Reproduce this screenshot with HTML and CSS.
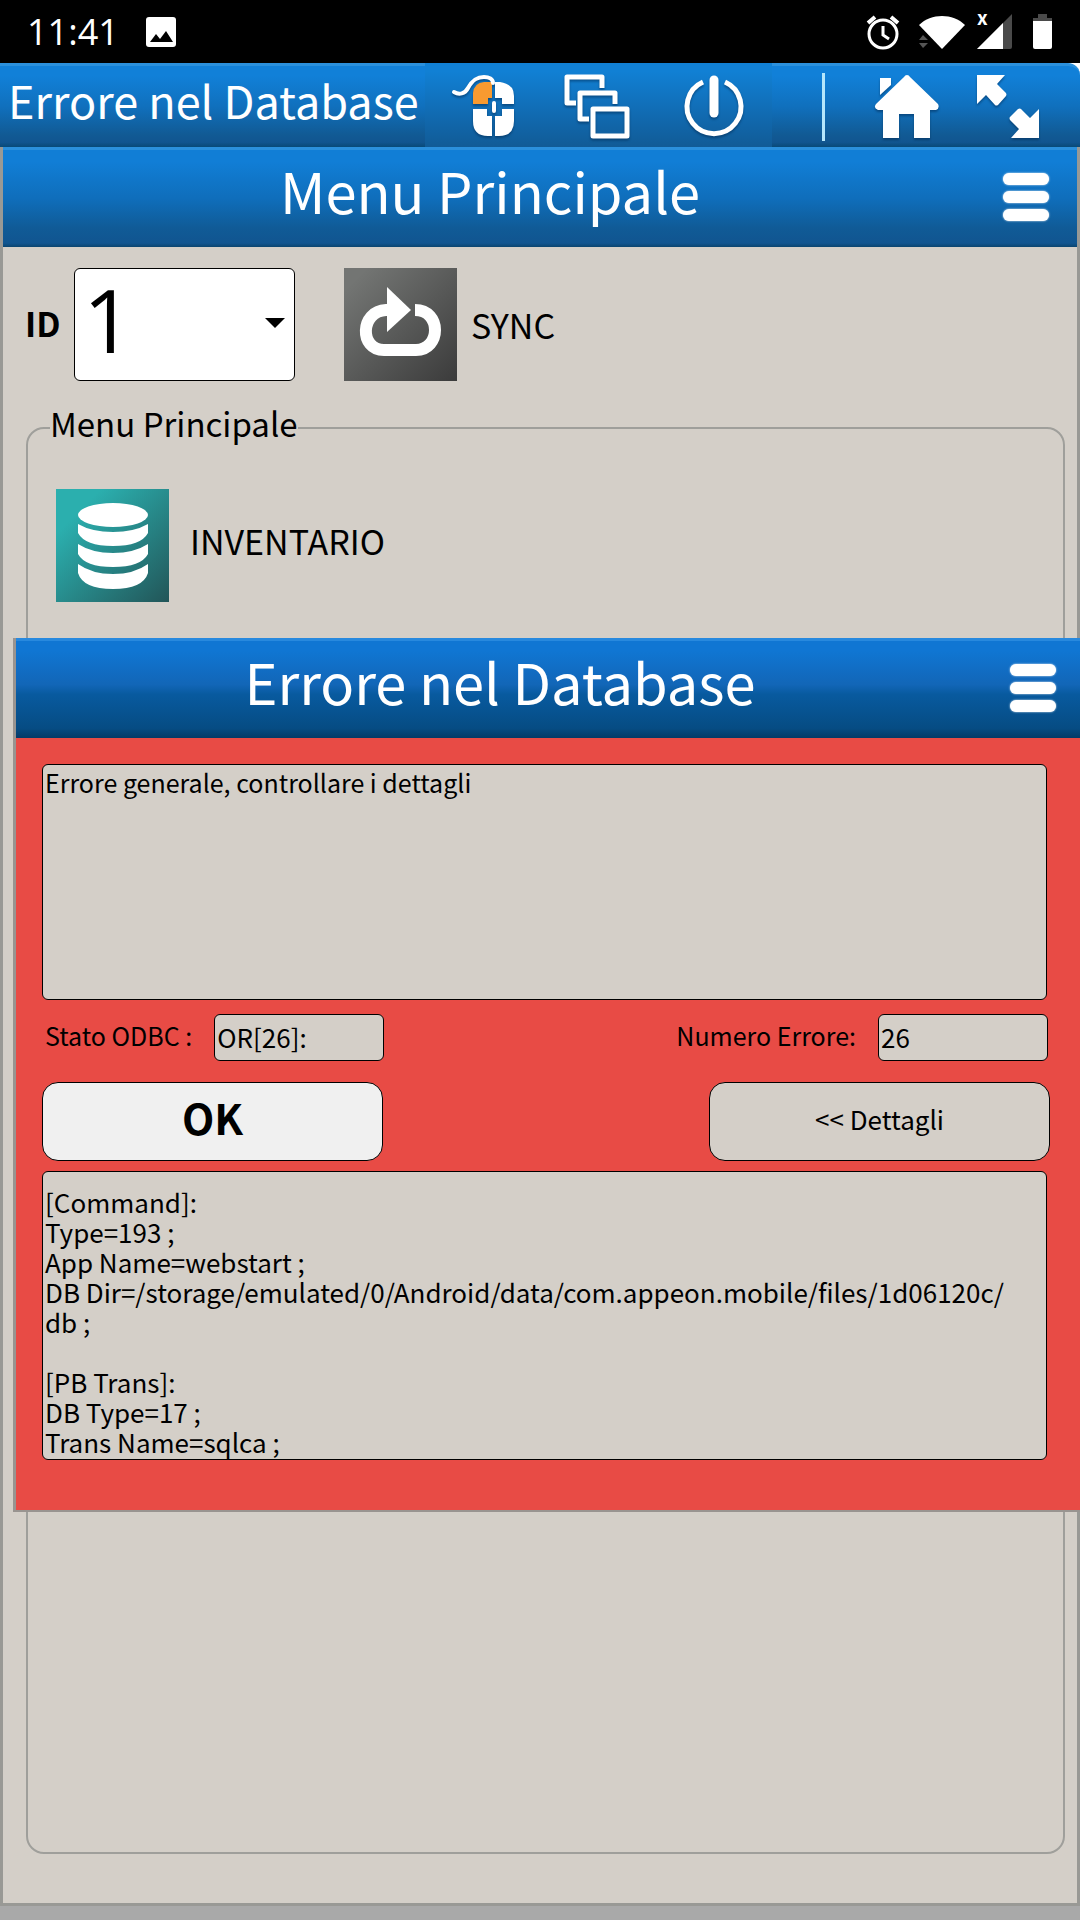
FILE: index.html
```html
<!DOCTYPE html>
<html lang="it">
<head>
  <meta charset="UTF-8">
  <title>Errore nel Database</title>
  <meta name="viewport" content="width=device-width, initial-scale=1.0">
  <link rel="stylesheet" href="styles.css">
</head>
<body>

  <!-- Status bar -->
  <div class="status-bar">
    <span class="clock">11:41</span>
    <svg class="photo-icon" width="30" height="30" viewBox="0 0 30 30">
      <rect width="30" height="30" rx="3" fill="#fff"/>
      <path d="M4 25l6-8 4 5 6-8 7 11z" fill="#000"/>
    </svg>
    <div class="status-icons">
      <svg width="40" height="36" viewBox="0 0 40 36" fill="none" stroke="#fff">
        <circle cx="18" cy="20" r="14" stroke-width="3"/>
        <path d="M18 12v9l6 4" stroke-width="3"/>
        <path d="M3 9l7-6M33 9l-7-6" stroke-width="4"/>
      </svg>
      <svg width="48" height="36" viewBox="0 0 48 36">
        <path d="M2 11C14-1 36-1 48 11L25 35z" fill="#fff"/>
        <path d="M2 26l4-5 5 5zM2 29h9l-5 5z" fill="#555"/>
      </svg>
      <svg width="44" height="36" viewBox="0 0 44 36">
        <path d="M35 0v33a2 2 0 0 1-2 2H0z" fill="#4a4a4a"/>
        <path d="M26 9v26H0z" fill="#fff"/>
        <text class="no-sim" x="0" y="11">x</text>
      </svg>
      <svg width="20" height="36" viewBox="0 0 20 36">
        <path d="M5 0h9v4h5v4H0V4h5z" fill="#4a4a4a"/>
        <path d="M0 7h19v26a2 2 0 0 1-2 2H2a2 2 0 0 1-2-2z" fill="#fff"/>
      </svg>
    </div>
  </div>

  <!-- Toolbar -->
  <div class="toolbar">
    <div class="toolbar-title">Errore nel Database</div>
    <div class="toolbar-tools">
      <button class="tool" aria-label="Mouse">
        <svg width="64" height="66" viewBox="0 0 64 66">
          <path d="M22 30V19Q23 9 33 8h8v16h-4v6z" fill="#f89a30"/>
          <path d="M44 8h5q14 2 14 14v8H51v-6h-7zM22 35h14v7h5v20h-4q-15 0-15-15zM51 35h12v12q0 15-15 15h-4V42h7z" fill="#fff"/>
          <rect x="41" y="27" width="4" height="12" rx="2" fill="#fff"/>
          <path d="M3 18c5 3 11 2 14-4C22 5 27 3 33 3c5 0 9 2 9 6" fill="none" stroke="#fff" stroke-width="4" stroke-linecap="round"/>
        </svg>
      </button>
      <button class="tool" aria-label="Finestre">
        <svg width="64" height="66" viewBox="0 0 64 66" fill="none" stroke="#fff" stroke-width="5" stroke-linejoin="round">
          <path d="M9 29H0V3h35v11"/>
          <path d="M22 45h-9V19h35v11"/>
          <rect x="26" y="35" width="34" height="27"/>
        </svg>
      </button>
      <button class="tool" aria-label="Esci">
        <svg width="64" height="66" viewBox="0 0 64 66" fill="none" stroke="#fff">
          <path d="M21 8a27 27 0 1 0 22 0" stroke-width="5"/>
          <path d="M32 6v33" stroke-width="9" stroke-linecap="round"/>
        </svg>
      </button>
    </div>
    <div class="toolbar-nav">
      <span class="separator"></span>
      <button class="tool" aria-label="Home">
        <svg width="64" height="66" viewBox="0 0 64 66" fill="#fff">
          <path d="M32 1q2 0 3 2l28 27q2 4-2 6h-6v28H39V40H24v24H8V36H3q-5-2-2-6L29 3q1-2 3-2z"/>
          <path d="M5 4h11v7L5 21z"/>
        </svg>
      </button>
      <button class="tool" aria-label="Schermo intero">
        <svg width="64" height="66" viewBox="0 0 64 66" fill="#fff">
          <path d="M1 1h28l-8 9 9 9q1 2 0 3l-8 9q-2 1-3 0l-9-10-9 9z"/>
          <path d="M63 64H35l8-9-9-9q-1-2 0-3l8-8q2-1 3 0l9 9 9-9z"/>
        </svg>
      </button>
    </div>
  </div>

  <!-- Main window -->
  <div class="main-window">
    <div class="title-bar">
      <h1>Menu Principale</h1>
      <button class="menu-button" aria-label="Menu"><span></span><span></span><span></span></button>
    </div>

    <div class="id-row">
      <label for="idSelect">ID</label>
      <div class="select-wrap">
        <select id="idSelect">
          <option>1</option>
        </select>
      </div>
      <button class="icon-button">
        <svg width="113" height="113" viewBox="0 0 113 113">
          <defs>
            <linearGradient id="greyTile" x1="0" y1="0" x2="1" y2="1">
              <stop offset="0.1" stop-color="#737573"/>
              <stop offset="1" stop-color="#3b3b3b"/>
            </linearGradient>
          </defs>
          <rect width="113" height="113" fill="url(#greyTile)"/>
          <path d="M47 42H42C16 43 15 82 40 82H72C97 82 98 42 71 42" fill="none" stroke="#fff" stroke-width="12"/>
          <path d="M43 19L67 42 43 64z" fill="#fff"/>
        </svg>
        <span>SYNC</span>
      </button>
    </div>

    <fieldset class="menu-group">
      <legend>Menu Principale</legend>
      <button class="icon-button">
        <svg width="113" height="113" viewBox="0 0 113 113">
          <defs>
            <linearGradient id="tealTile" x1="0" y1="0" x2="1" y2="1">
              <stop offset="0.2" stop-color="#2bafae"/>
              <stop offset="1" stop-color="#225558"/>
            </linearGradient>
          </defs>
          <rect width="113" height="113" fill="url(#tealTile)"/>
          <g fill="#fff">
            <ellipse cx="57" cy="26" rx="35" ry="12"/>
            <path d="M22 35Q36 43 57 43T92 35V44Q85 57 57 57T22 44z"/>
            <path d="M22 55Q36 64 57 64T92 55V65Q85 78 57 78T22 65z"/>
            <path d="M22 75Q36 85 57 85T92 75V84Q87 100 57 100T22 84z"/>
          </g>
        </svg>
        <span>INVENTARIO</span>
      </button>
    </fieldset>

    <!-- Error dialog -->
    <div class="dialog" role="dialog" aria-labelledby="dialogTitle">
      <div class="title-bar dialog-bar">
        <h2 id="dialogTitle">Errore nel Database</h2>
        <button class="menu-button" aria-label="Menu"><span></span><span></span><span></span></button>
      </div>
      <div class="dialog-body">
        <textarea class="message" aria-label="Messaggio" readonly>Errore generale, controllare i dettagli</textarea>
        <div class="field-row">
          <div class="field">
            <label for="odbcState">Stato ODBC :</label>
            <input type="text" id="odbcState" value="OR[26]:" readonly>
          </div>
          <div class="field">
            <label for="errorNumber">Numero Errore:</label>
            <input type="text" id="errorNumber" value="26" readonly>
          </div>
        </div>
        <div class="button-row">
          <button class="dialog-button ok">OK</button>
          <button class="dialog-button">&lt;&lt; Dettagli</button>
        </div>
        <textarea class="details" aria-label="Dettagli" readonly>[Command]:
Type=193 ;
App Name=webstart ;
DB Dir=/storage/emulated/0/Android/data/com.appeon.mobile/files/1d06120c/
db ;

[PB Trans]:
DB Type=17 ;
Trans Name=sqlca ;</textarea>
      </div>
    </div>
  </div>

</body>
</html>
```

FILE: styles.css
```css
* {
  box-sizing: border-box;
}

body {
  display: flex;
  flex-direction: column;
  min-height: 100vh;
  margin: 0;
  background: #a9a9a9;
  color: #000;
  font-family: "Noto Sans CJK SC", "Noto Sans", sans-serif;
  font-size: 26px;
}

button,
input,
select,
textarea {
  margin: 0;
  font: inherit;
  color: inherit;
}

button {
  padding: 0;
  border: 0;
  background: none;
  cursor: pointer;
}

svg {
  display: block;
  overflow: visible;
}

/* Status bar */
.status-bar {
  display: flex;
  align-items: center;
  height: 63px;
  padding: 0 27px;
  background: #000;
  color: #fff;
}

.clock {
  font-family: "Open Sans", sans-serif;
  font-size: 36px;
  line-height: 60px;
}

.photo-icon {
  margin-left: 27px;
}

.status-icons {
  display: flex;
  gap: 12px;
  margin-left: auto;
}

.no-sim {
  fill: #fff;
  font-size: 19px;
  font-weight: bold;
}

/* Toolbar */
.toolbar {
  display: flex;
  height: 84px;
  background: #fff;
}

.toolbar-title,
.toolbar-nav {
  border-top: 3px solid #2b90dc;
  background: linear-gradient(#1180d8 12%, #1070bd 50%, #115a94 85%, #115590 94%, #084a78 100%);
}

.toolbar-title {
  width: 425px;
  padding-left: 8px;
  color: #fff;
  font-size: 45px;
  line-height: 68px;
  white-space: nowrap;
}

.toolbar-tools {
  display: flex;
  align-items: center;
  justify-content: space-between;
  width: 347px;
  padding: 3px 26px 0;
  background: linear-gradient(#1180d4 10%, #116fb9 50%, #115b96);
}

.toolbar-nav {
  display: flex;
  flex: 1;
  align-items: center;
  padding: 0 40px 0 50px;
  border-top-right-radius: 12px;
}

.tool svg {
  filter: drop-shadow(0 2px 1px rgba(0, 40, 80, 0.5));
}

.separator {
  width: 3px;
  height: 68px;
  margin-right: 50px;
  background: #b5e6fb;
}

.toolbar-nav .tool + .tool {
  margin-left: auto;
}

/* Windows */
.main-window {
  position: relative;
  display: flex;
  flex: 1;
  flex-direction: column;
  margin-bottom: 14px;
  border: 3px solid #999995;
  border-top: 0;
  background: #d4cfc8;
}

.title-bar {
  display: flex;
  align-items: center;
  height: 100px;
  padding: 0 28px 3px 0;
  border-top: 3px solid #2b90dc;
  background: linear-gradient(#117ed6 12%, #0f6ebb 50%, #105b97 80%, #115590 96%, #0b456f 100%);
  color: #fff;
}

.title-bar h1,
.title-bar h2 {
  flex: 1;
  margin: 0;
  padding: 0 26px 14px 0;
  font-size: 56px;
  font-weight: normal;
  line-height: 80px;
  text-align: center;
}

.dialog-bar {
  padding-right: 24px;
  border-top-color: #2889de;
  background: linear-gradient(#1076d3 10%, #1266b7 45%, #085a9f 55%, #064c83 90%, #053a66 100%);
}

.menu-button {
  display: flex;
  flex-direction: column;
  gap: 6px;
  width: 46px;
}

.menu-button span {
  height: 12px;
  border-radius: 6px;
  background: #fff;
  box-shadow: 0 0 2px #fff;
}

.id-row {
  display: flex;
  align-items: center;
  padding: 21px 22px 22px;
  font-size: 34px;
}

.id-row label {
  width: 49px;
  padding-bottom: 4px;
  font-weight: bold;
}

.select-wrap {
  position: relative;
  width: 221px;
  margin-right: 49px;
}

/* drop-down arrow */
.select-wrap::after {
  content: "";
  position: absolute;
  top: 50px;
  right: 10px;
  border: 10px solid transparent;
  border-top-color: #000;
  border-bottom: 0;
  pointer-events: none;
}

.select-wrap select {
  display: block;
  width: 100%;
  height: 113px;
  padding: 0 8px 12px;
  border: 1px solid #000;
  border-radius: 6px;
  appearance: none;
  background: #fff;
  font-family: "Open Sans", sans-serif;
  font-size: 88px;
  line-height: 98px;
}

.icon-button {
  display: flex;
  align-items: center;
  gap: 14px;
  font-size: 34px;
}

.menu-group {
  flex: 1;
  margin: 0 12px 49px 23px;
  padding: 36px 22px;
  border: 2px solid #9f9f9b;
  border-radius: 18px;
}

.menu-group legend {
  padding: 0 0 10px;
  font-size: 33px;
  line-height: 40px;
}

.menu-group .icon-button {
  gap: 21px;
  margin-left: 6px;
}

.menu-group .icon-button span {
  padding-bottom: 10px;
}

/* Error dialog, floats over the main window */
.dialog {
  position: absolute;
  top: 491px;
  right: -3px;
  left: 10px;
  border-bottom: 2px solid #999490;
  border-left: 3px solid #999490;
  background: #e84b45;
}

.dialog-body {
  padding: 26px 30px 50px 26px;
}

.dialog textarea {
  display: block;
  width: calc(100% - 3px);
  border: 1px solid #000;
  border-radius: 6px;
  background: #d4cfc8;
  line-height: 30px;
  outline: 0;
  overflow: hidden;
  resize: none;
}

.dialog .message {
  height: 236px;
  padding: 2px;
  font-size: 25px;
}

.dialog .details {
  height: 289px;
  padding: 15px 2px 0;
}

.field-row,
.button-row {
  display: flex;
  justify-content: space-between;
}

.field-row {
  margin: 14px 2px 21px 3px;
}

.field {
  display: flex;
  line-height: 42px;
}

.field label {
  min-width: 168px;
  padding-right: 22px;
  font-size: 25px;
}

.field input {
  width: 170px;
  height: 47px;
  padding: 0 2px 2px;
  border: 1px solid #000;
  border-radius: 6px;
  background: #d4cfc8;
}

.button-row {
  margin-bottom: 10px;
}

.dialog-button {
  width: 341px;
  height: 79px;
  padding-bottom: 6px;
  border: 1px solid #000;
  border-radius: 16px;
  background: #d4cfc8;
}

.dialog-button.ok {
  padding-bottom: 10px;
  background: #f0f0f0;
  font-size: 42px;
  font-weight: bold;
}
```
